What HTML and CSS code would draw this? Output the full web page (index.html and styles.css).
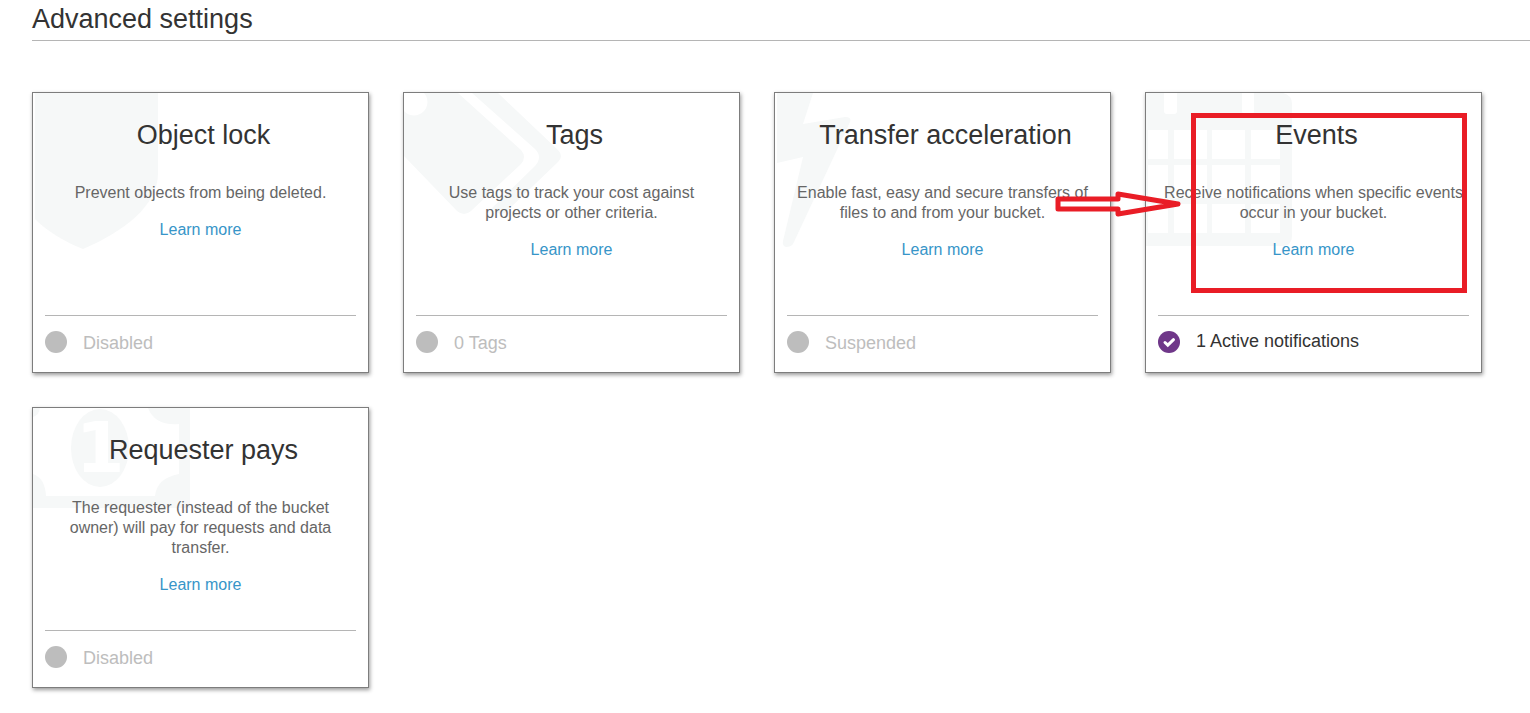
FILE: index.html
```html
<!DOCTYPE html>
<html lang="en">
<head>
<meta charset="utf-8">
<title>Advanced settings</title>
<link rel="stylesheet" href="styles.css">
</head>
<body>
<main class="settings">
  <h1 class="settings-title">Advanced settings</h1>
  <div class="cards">
    <section class="card">
      <svg class="watermark" viewBox="0 0 160 160" aria-hidden="true">
        <path d="M2 0H125V80C125 112 92 138 50 156C32 149 15 139 2 126Z"/>
      </svg>
      <h2 class="card-title">Object lock</h2>
      <p class="card-text">Prevent objects from being deleted.</p>
      <a class="card-link" href="#">Learn more</a>
      <div class="status"><span class="dot"></span><span class="status-label">Disabled</span></div>
    </section>

    <section class="card">
      <svg class="watermark" viewBox="0 0 160 160" aria-hidden="true">
        <path fill-rule="evenodd" d="M20 0H54L117 57Q123 64 117 71L67 118Q60 124 53 118L0 63V18A13 13 0 0 0 20 0Z"/>
        <path d="M68 0H94L154 57Q160 63 154 69L103 118Q98 124 91 118L88 115L131 73Q139 64 131 56Z"/>
      </svg>
      <h2 class="card-title">Tags</h2>
      <p class="card-text">Use tags to track your cost against projects or other criteria.</p>
      <a class="card-link" href="#">Learn more</a>
      <div class="status"><span class="dot"></span><span class="status-label">0 Tags</span></div>
    </section>

    <section class="card">
      <svg class="watermark" viewBox="0 0 160 160" aria-hidden="true">
        <path d="M2 0H38L28 31L70 24Q77 24 75 29L18 151Q16 154 11 154Q7 153 8 148L28 64L2 70Z"/>
      </svg>
      <h2 class="card-title">Transfer acceleration</h2>
      <p class="card-text">Enable fast, easy and secure transfers of files to and from your bucket.</p>
      <a class="card-link" href="#">Learn more</a>
      <div class="status"><span class="dot"></span><span class="status-label">Suspended</span></div>
    </section>

    <section class="card">
      <svg class="watermark" viewBox="0 0 160 160" aria-hidden="true">
        <path fill-rule="evenodd" d="M0 0H18V18Q18 21 21 21H28Q31 21 31 18V0H96V18Q96 21 99 21H105Q108 21 108 18V0H137Q146 2 146 11V143Q146 153 136 153H0Z
          M2 37V66H22V37ZM28 37V66H61V37ZM66 37V66H99V37ZM105 37V66H134V37Z
          M2 72V105H22V72ZM28 72V105H61V72ZM66 72V105H99V72ZM105 72V105H134V72Z
          M2 111V140H22V111ZM28 111V140H61V111ZM66 111V140H99V111ZM105 111V140H134V111Z"/>
      </svg>
      <h2 class="card-title">Events</h2>
      <p class="card-text">Receive notifications when specific events occur in your bucket.</p>
      <a class="card-link" href="#">Learn more</a>
      <div class="status status-active">
        <svg class="check" viewBox="0 0 22 22" aria-hidden="true">
          <circle cx="11" cy="11" r="11"/>
          <path d="M7 11.5L9.8 14.2L15.5 8.7"/>
        </svg>
        <span class="status-label">1 Active notifications</span>
      </div>
      <div class="highlight"></div>
      <svg class="arrow" viewBox="0 0 128 28" aria-hidden="true">
        <path d="M3 9H63V4L123 14L63 24V19H3Z"/>
      </svg>
    </section>

    <section class="card">
      <svg class="watermark" viewBox="0 0 160 160" aria-hidden="true">
        <path fill-rule="evenodd" d="M0 0H157V100H0ZM7 0Q6 7 0 9V66Q12 70 13 88H122Q124 70 146 66V16Q122 18 115 0Z"/>
        <ellipse cx="67" cy="40" rx="29" ry="39"/>
        <text class="bill-value" x="67" y="64">1</text>
      </svg>
      <h2 class="card-title">Requester pays</h2>
      <p class="card-text">The requester (instead of the bucket owner) will pay for requests and data transfer.</p>
      <a class="card-link" href="#">Learn more</a>
      <div class="status"><span class="dot"></span><span class="status-label">Disabled</span></div>
    </section>
  </div>
</main>
</body>
</html>
```

FILE: styles.css
```css
* {
  box-sizing: border-box;
}

body {
  margin: 0;
  background: #fff;
  color: #333;
  font-family: "Liberation Sans", Arial, sans-serif;
}

.settings {
  padding: 0 0 24px 32px;
}

.settings-title {
  margin: 0 0 51px;
  padding: 4px 0 5px;
  border-bottom: 1px solid #b5b5b5;
  font-size: 27px;
  font-weight: 400;
  line-height: 31px;
}

.cards {
  display: grid;
  grid-template-columns: repeat(auto-fill, 337px);
  gap: 34px;
}

.card {
  position: relative;
  display: flex;
  flex-direction: column;
  align-items: center;
  min-height: 281px;
  padding: 26px 12px 0;
  border: 1px solid #7d7d7d;
  background: #fff;
  box-shadow: 1px 2px 4px rgba(0, 0, 0, 0.4);
  text-align: center;
}

.watermark {
  position: absolute;
  top: 0;
  left: 0;
  width: 160px;
  height: 160px;
  fill: #f6f8f8;
}

.bill-value {
  fill: #fff;
  font-family: "DejaVu Sans", sans-serif;
  font-size: 70px;
  font-weight: 700;
  text-anchor: middle;
}

.card-title,
.card-text,
.card-link,
.status {
  position: relative;
}

.card-title {
  margin: 0 0 32px;
  padding-left: 6px;
  font-size: 27px;
  font-weight: 400;
  line-height: 32px;
}

.card-text {
  margin: 0 0 17px;
  padding: 0 4px;
  color: #666;
  font-size: 16px;
  line-height: 20px;
}

.card-link {
  color: #3795c8;
  font-size: 16px;
  line-height: 20px;
  text-decoration: none;
}

.status {
  display: flex;
  align-items: center;
  gap: 16px;
  width: 100%;
  height: 57px;
  margin-top: auto;
  padding-bottom: 4px;
  border-top: 1px solid #b5b5b5;
  color: #bdbdbd;
  font-size: 18px;
  line-height: 20px;
}

.status-label {
  padding-top: 2px;
}

.status-active {
  color: #333;
}

.status-active .status-label {
  padding: 0 0 2px;
}

.dot {
  width: 22px;
  height: 22px;
  border-radius: 50%;
  background: #bdbdbd;
}

.check {
  width: 22px;
  height: 22px;
  fill: #6f3789;
}

.check path {
  fill: none;
  stroke: #fff;
  stroke-width: 3;
  stroke-linecap: round;
}

.highlight {
  position: absolute;
  top: 20px;
  left: 45px;
  width: 276px;
  height: 180px;
  border: 5px solid #e91d26;
}

.arrow {
  position: absolute;
  top: 97px;
  left: -91px;
  width: 128px;
  height: 28px;
  fill: none;
  stroke: #e91d26;
  stroke-width: 5;
  stroke-linejoin: round;
}
```
